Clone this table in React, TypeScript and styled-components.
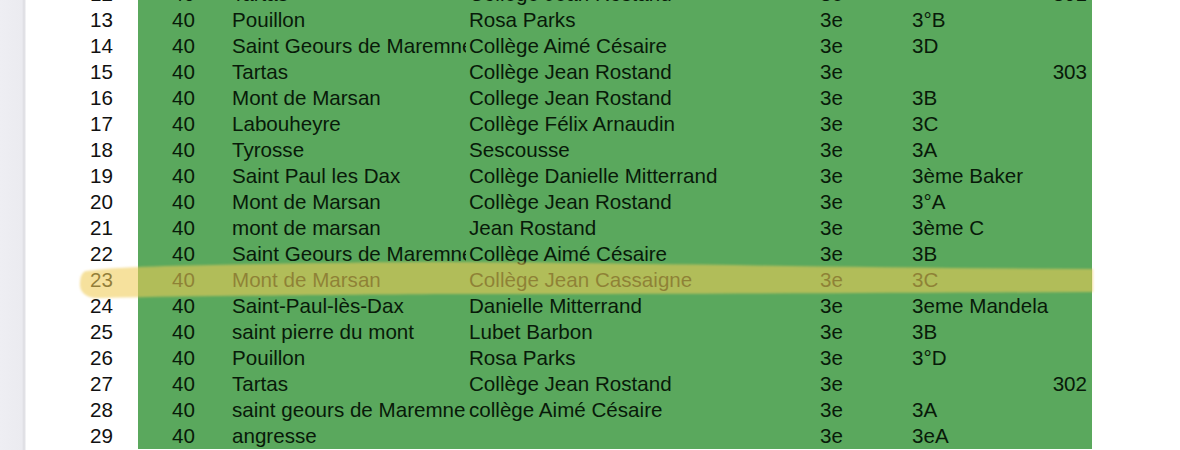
import React from "react";
import styled, { createGlobalStyle } from "styled-components";

const Global = createGlobalStyle`
  html, body { margin: 0; padding: 0; background: #ffffff; }
  #root { width: 1180px; height: 450px; }
`;

const Page = styled.div`
  position: relative;
  display: flex;
  width: 1180px;
  height: 450px;
  overflow: hidden;
  background: #ffffff;
  font-family: "Liberation Sans", Arial, Helvetica, sans-serif;
`;

const Sidebar = styled.div`
  flex: 0 0 26px;
  background: linear-gradient(
    to right,
    #eeeef3 0px,
    #ebebf0 22px,
    #dcdce1 24px,
    #e6e6ea 25px,
    #fbfbfc 26px
  );
`;

const Sheet = styled.div`
  flex: 1;
  overflow: hidden;
`;

const Table = styled.div`
  display: flex;
  flex-direction: column;
  margin-top: -19px;
`;

const Row = styled.div`
  display: grid;
  grid-template-columns: 112px 91px 237px 351px 92px 91px 92px;
  height: 26px;
  line-height: 26px;
  font-size: 20.6px;
`;

const RowNum = styled.div`
  text-align: right;
  padding-right: 25px;
  color: #111111;
  background: #ffffff;
`;

const Cell = styled.div<{
  $align?: "left" | "center" | "right";
  $clip?: boolean;
  $raise?: boolean;
}>`
  background: #5aa85d;
  color: #081a09;
  padding: 0 ${(p) => (p.$align === "right" ? "5px" : "3px")} 0 3px;
  white-space: nowrap;
  text-align: ${(p) => p.$align ?? "left"};
  overflow: ${(p) => (p.$clip ? "hidden" : "visible")};
  text-overflow: clip;
  position: relative;
  z-index: ${(p) => (p.$raise ? 1 : 0)};
`;

const Highlight = styled.svg`
  position: absolute;
  left: 0;
  top: 0;
  width: 1180px;
  height: 450px;
  pointer-events: none;
  z-index: 2;
`;

type R = [number, string, string, string, string, string];

const rows: R[] = [
  [12, "Tartas", "Collège Jean Rostand", "3e", "", "301"],
  [13, "Pouillon", "Rosa Parks", "3e", "3°B", ""],
  [14, "Saint Geours de Maremne", "Collège Aimé Césaire", "3e", "3D", ""],
  [15, "Tartas", "Collège Jean Rostand", "3e", "", "303"],
  [16, "Mont de Marsan", "College Jean Rostand", "3e", "3B", ""],
  [17, "Labouheyre", "Collège Félix Arnaudin", "3e", "3C", ""],
  [18, "Tyrosse", "Sescousse", "3e", "3A", ""],
  [19, "Saint Paul les Dax", "Collège Danielle Mitterrand", "3e", "3ème Baker", ""],
  [20, "Mont de Marsan", "Collège Jean Rostand", "3e", "3°A", ""],
  [21, "mont de marsan", "Jean Rostand", "3e", "3ème C", ""],
  [22, "Saint Geours de Maremne", "Collège Aimé Césaire", "3e", "3B", ""],
  [23, "Mont de Marsan", "Collège Jean Cassaigne", "3e", "3C", ""],
  [24, "Saint-Paul-lès-Dax", "Danielle Mitterrand", "3e", "3eme Mandela", ""],
  [25, "saint pierre du mont", "Lubet Barbon", "3e", "3B", ""],
  [26, "Pouillon", "Rosa Parks", "3e", "3°D", ""],
  [27, "Tartas", "Collège Jean Rostand", "3e", "", "302"],
  [28, "saint geours de Maremne", "collège Aimé Césaire", "3e", "3A", ""],
  [29, "angresse", "", "3e", "3eA", ""],
];

export default function App() {
  return (
    <>
      <Global />
      <Page>
        <Sidebar />
        <Sheet>
          <Table>
            {rows.map(([n, city, school, level, cls, room]) => (
              <Row key={n}>
                <RowNum>{n}</RowNum>
                <Cell $align="center">40</Cell>
                <Cell $clip>{city}</Cell>
                <Cell $clip>{school}</Cell>
                <Cell>{level}</Cell>
                <Cell $raise>{cls}</Cell>
                <Cell $align="right">{room}</Cell>
              </Row>
            ))}
          </Table>
        </Sheet>
        <Highlight viewBox="0 0 1180 450">
          <defs>
            <filter id="soft" x="-5%" y="-50%" width="110%" height="200%">
              <feGaussianBlur stdDeviation="0.8" />
            </filter>
          </defs>
          <path
            d="M 86 271 C 110 268, 135 267, 165 266 C 260 264, 350 262, 450 262 C 650 263, 850 268, 1093 269 L 1093 292 C 900 293, 700 294, 450 294 C 300 295, 200 296, 102 298 C 86 299, 79 292, 80 283 C 80 277, 82 272, 86 271 Z"
            fill="rgba(240, 203, 88, 0.58)"
            filter="url(#soft)"
          />
        </Highlight>
      </Page>
    </>
  );
}
